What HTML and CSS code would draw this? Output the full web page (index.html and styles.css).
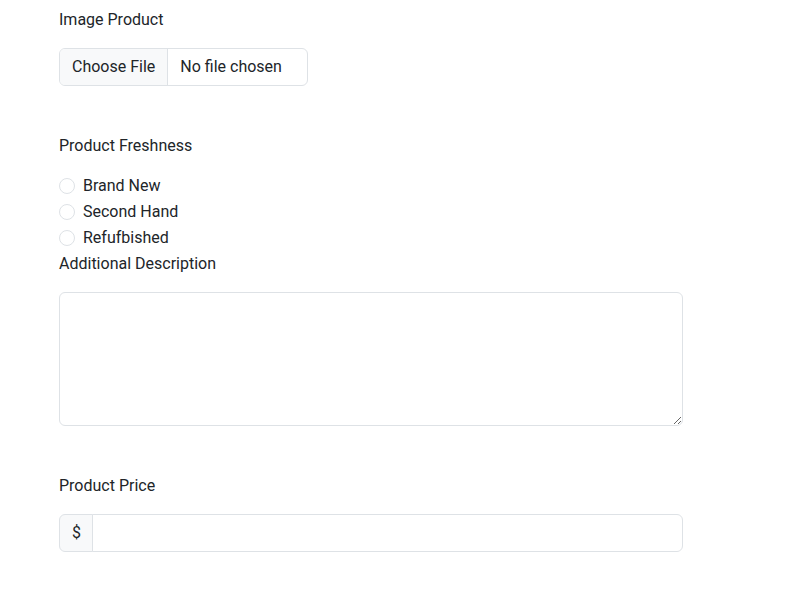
FILE: index.html
```html
<!DOCTYPE html>
<html>
<head>
<meta charset="utf-8">
<link rel="stylesheet" href="styles.css">
</head>
<body>
<form class="form">
  <div class="field">
    <label class="form-label">Image Product</label>
    <div class="file-input">
      <span class="file-btn">Choose File</span>
      <span class="file-name">No file chosen</span>
    </div>
  </div>

  <div class="field">
    <label class="form-label">Product Freshness</label>
    <div class="form-check"><span class="radio"></span><span>Brand New</span></div>
    <div class="form-check"><span class="radio"></span><span>Second Hand</span></div>
    <div class="form-check"><span class="radio"></span><span>Refufbished</span></div>
    <label class="form-label">Additional Description</label>
    <textarea class="form-control textarea"></textarea>
  </div>

  <div class="field">
    <label class="form-label">Product Price</label>
    <div class="input-group">
      <span class="input-group-text">$</span>
      <input class="form-control grp-input" type="text">
    </div>
  </div>
</form>
</body>
</html>
```
FILE: styles.css
```css
* { box-sizing: border-box; }
html, body { margin: 0; padding: 0; background: #fff; }
body {
  font-family: Roboto, "Liberation Sans", sans-serif;
  font-size: 16px;
  line-height: 24px;
  color: #212529;
}
.form {
  width: 624px;
  margin-left: 59px;
  padding-top: 8px;
}
.field { margin-bottom: 48px; }
.field:last-child { margin-bottom: 0; }
.form-label {
  display: block;
  margin-bottom: 16px;
}
.file-input {
  display: flex;
  width: 249px;
  height: 38px;
  border: 1px solid #dee2e6;
  border-radius: 6px;
  overflow: hidden;
}
.file-btn {
  background: #f8f9fa;
  padding: 6px 12px;
  border-right: 1px solid #dee2e6;
}
.file-name { padding: 6px 12px; }
.form-check {
  display: flex;
  align-items: center;
  height: 24px;
  margin-bottom: 2px;
}
.radio {
  width: 16px;
  height: 16px;
  border: 1px solid #dee2e6;
  border-radius: 50%;
  margin-right: 8px;
}
.form-control {
  font: inherit;
  color: inherit;
  border: 1px solid #dee2e6;
  border-radius: 6px;
  background: #fff;
  outline: none;
}
.textarea {
  display: block;
  width: 624px;
  height: 134px;
  padding: 6px 12px;
}
.input-group {
  display: flex;
  height: 38px;
}
.input-group-text {
  display: flex;
  align-items: center;
  padding: 6px 11px 6px 12px;
  background: #f8f9fa;
  border: 1px solid #dee2e6;
  border-radius: 6px 0 0 6px;
}
.grp-input {
  flex: 1;
  margin-left: -1px;
  border-radius: 0 6px 6px 0;
  padding: 6px 12px;
}
```
